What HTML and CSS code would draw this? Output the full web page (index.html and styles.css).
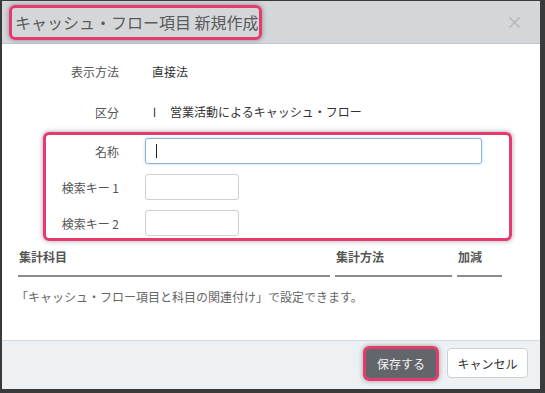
FILE: index.html
```html
<!DOCTYPE html>
<html lang="ja">
<head>
<meta charset="utf-8">
<link rel="stylesheet" href="styles.css">
</head>
<body>
<div class="modal">
  <div class="modal-header">
    <h4 class="title hl">キャッシュ・フロー項目 新規作成</h4>
    <span class="close">×</span>
  </div>
  <div class="modal-body">
    <div class="row">
      <div class="label">表示方法</div>
      <div class="static">直接法</div>
    </div>
    <div class="row">
      <div class="label">区分</div>
      <div class="static"><span class="roman">Ⅰ</span>営業活動によるキャッシュ・フロー</div>
    </div>
    <div class="group hl">
      <div class="row in">
        <div class="label">名称</div>
        <div class="input focus"><span class="caret"></span></div>
      </div>
      <div class="row in">
        <div class="label">検索キー 1</div>
        <div class="input short"></div>
      </div>
      <div class="row in">
        <div class="label">検索キー 2</div>
        <div class="input short"></div>
      </div>
    </div>
    <div class="table-head">
      <div class="th c1">集計科目</div>
      <div class="th c2">集計方法</div>
      <div class="th c3">加減</div>
    </div>
    <p class="note">「キャッシュ・フロー項目と科目の関連付け」で設定できます。</p>
  </div>
  <div class="modal-footer">
    <div class="hl btn-wrap"><button class="btn primary">保存する</button></div>
    <button class="btn default">キャンセル</button>
  </div>
</div>
</body>
</html>
```
FILE: styles.css
```css
* { box-sizing: border-box; }
html, body { margin: 0; padding: 0; }
body {
  background: #3a3a3a;
  width: 545px;
  height: 393px;
  overflow: hidden;
  font-family: "Noto Sans CJK JP", "Noto Sans", sans-serif;
  font-size: 12px;
  color: #333;
}
.modal {
  margin: 1px 5px 4px 2px;
  width: 538px;
  height: 388px;
  background: #fff;
  display: flex;
  flex-direction: column;
}
.modal-header {
  height: 43px;
  background: #d4d7da;
  border-bottom: 1px solid #c4c7ca;
  display: flex;
  align-items: flex-start;
  justify-content: space-between;
  padding: 4px 0 0 7px;
}
.hl {
  border: 3px solid #e63a6f;
  border-radius: 6px;
  box-shadow: 0 0 4px 1px rgba(0,0,0,0.25);
}
.title {
  margin: 0;
  font-weight: normal;
  font-size: 16px;
  color: #5a5a5a;
  line-height: 29px;
  height: 35px;
  width: 253px;
  padding: 0 0 0 3px;
  white-space: nowrap;
}
.close {
  color: #b0b2b4;
  font-size: 17px;
  line-height: 20px;
  margin: 7px 17px 0 0;
}
.modal-body {
  flex: 1;
  padding-top: 12px;
}
.row {
  display: grid;
  grid-template-columns: 117px 1fr;
  column-gap: 26px;
  align-items: center;
  height: 30px;
}
.row + .row { margin-top: 11px; }
.label {
  text-align: right;
  color: #555;
  white-space: nowrap;
}
.static {
  padding-left: 7px;
  color: #333;
}
.roman {
  display: inline-block;
  font-family: "Liberation Serif", serif;
  font-size: 13px;
  width: 22px;
  margin-left: -4px;
}
.group {
  margin: 5px 0 0 41px;
  width: 469px;
  height: 109px;
  padding: 3px 0 0 0;
}
.group .row {
  grid-template-columns: 73px 1fr;
  height: 26px;
  margin-top: 10px;
}
.group .row:first-child { margin-top: 0; }
.input {
  height: 26px;
  width: 337px;
  border: 1px solid #d0d0d0;
  border-radius: 3px;
  background: #fff;
  position: relative;
}
.input.short { width: 94px; }
.input.focus {
  border-color: #8fb3d2;
  box-shadow: 0 0 3px rgba(102,175,233,0.5);
}
.caret {
  position: absolute;
  left: 10px;
  top: 5px;
  width: 1px;
  height: 14px;
  background: #222;
}
.table-head {
  display: grid;
  grid-template-columns: 312px 117px 45px;
  column-gap: 5px;
  margin-left: 16px;
}
.th {
  font-weight: bold;
  color: #555;
  padding: 8px 0 10px 1px;
  line-height: 16px;
  border-bottom: 2px solid #8c8c8c;
}
.note {
  margin: 12px 0 0 14px;
  line-height: 16px;
  color: #666;
}
.modal-footer {
  height: 49px;
  background: #eef1f3;
  border-top: 1px solid #d6d8da;
  display: flex;
  justify-content: flex-end;
  align-items: center;
  gap: 8px;
  padding: 0 12px 4px 0;
}
.btn-wrap {
  width: 76px;
  height: 35px;
}
.btn {
  font-family: inherit;
  font-size: 12px;
  border-radius: 4px;
  cursor: pointer;
}
.primary {
  display: block;
  width: 100%;
  height: 100%;
  border: none;
  border-radius: 2px;
  background: #62666b;
  color: #f2f2f2;
}
.default {
  width: 81px;
  height: 30px;
  border: 1px solid #cfcfcf;
  background: #fff;
  color: #333;
}
```
